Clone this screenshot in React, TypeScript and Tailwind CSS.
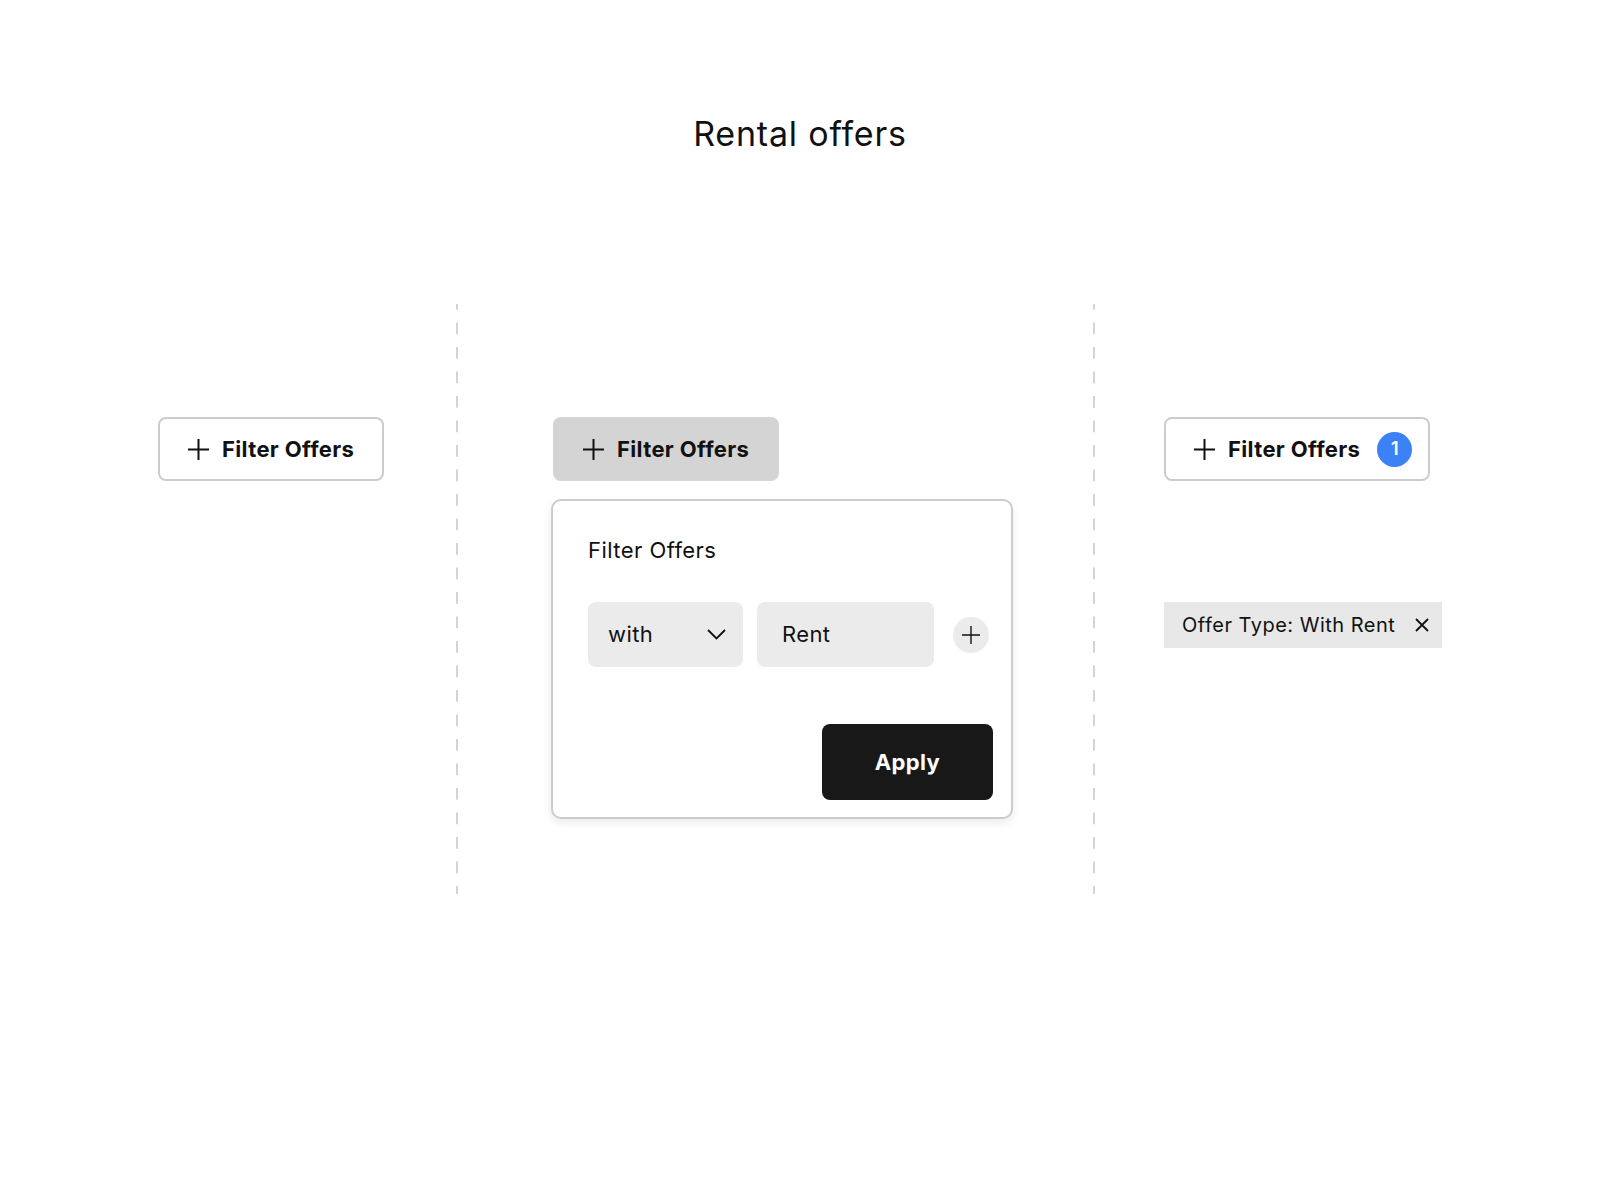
import React from "react";

const PlusIcon = ({ size = 21, stroke = 2 }: { size?: number; stroke?: number }) => (
  <svg width={size} height={size} viewBox="0 0 21 21" fill="none" stroke="currentColor" strokeWidth={stroke}>
    <path d="M10.5 0v21M0 10.5h21" />
  </svg>
);

const Divider = ({ className = "" }: { className?: string }) => (
  <div
    className={`w-[2px] h-full shrink-0 bg-[linear-gradient(to_bottom,#d4d4d4_50%,transparent_50%)] bg-[length:2px_24.5px] bg-[position:0_-6px] ${className}`}
  />
);

const FilterButton = ({
  className = "",
  children,
}: {
  className?: string;
  children?: React.ReactNode;
}) => (
  <button
    className={`h-[64px] rounded-[8px] flex flex-row items-center pl-[28px] text-[22px] font-bold text-[#111] ${className}`}
  >
    <PlusIcon />
    <span className="ml-[13px] leading-none tracking-[0.35px]">Filter Offers</span>
    {children}
  </button>
);

export default function App() {
  return (
    <div className="min-h-screen w-full bg-white text-[#111] font-['Inter',sans-serif]">
      <h1 className="pt-[114px] text-center text-[34px] leading-[40px] font-normal tracking-[0.8px]">Rental offers</h1>

      <div className="mt-[150px] h-[590px] flex flex-row items-stretch px-[158px]">
        {/* default state */}
        <div className="w-[226px] shrink-0 pt-[113px]">
          <FilterButton className="w-[226px] bg-white border-2 border-[#cccccc]" />
        </div>

        <Divider className="ml-[72px]" />

        {/* open state */}
        <div className="w-[462px] shrink-0 ml-[93px] pt-[113px] flex flex-col items-start">
          <FilterButton className="ml-[2px] w-[226px] bg-[#d4d4d4] pl-[30px]" />
          <div className="mt-[18px] w-[462px] h-[320px] rounded-[10px] border-2 border-[#cccccc] bg-white shadow-[0_4px_10px_rgba(0,0,0,0.08)] flex flex-col pt-[35px] pl-[35px] pr-[18px] pb-[17px]">
            <p className="text-[22px] leading-[28px] tracking-[0.45px]">Filter Offers</p>
            <div className="mt-[38px] flex flex-row items-center">
              <div className="w-[155px] h-[65px] rounded-[8px] bg-[#ebebeb] flex flex-row items-center justify-between pl-[20px] pr-[17px] text-[22px] tracking-[0.4px]">
                <span>with</span>
                <svg width="19" height="11" viewBox="0 0 19 11" fill="none" stroke="#111" strokeWidth="1.8">
                  <path d="M1 1l8.5 8.5L18 1" />
                </svg>
              </div>
              <div className="ml-[14px] w-[177px] h-[65px] rounded-[8px] bg-[#ebebeb] flex items-center pl-[25px] text-[22px] tracking-[0.4px]">
                Rent
              </div>
              <button className="ml-[19px] w-9 h-9 rounded-full bg-[#ebebeb] flex items-center justify-center">
                <PlusIcon size={18} stroke={1.6} />
              </button>
            </div>
            <button className="mt-auto self-end w-[171px] h-[76px] rounded-[8px] bg-[#181818] text-white text-[22px] font-bold tracking-[0.35px]">
              Apply
            </button>
          </div>
        </div>

        <Divider className="ml-[80px]" />

        {/* applied state */}
        <div className="w-[278px] shrink-0 ml-[69px] pt-[113px] flex flex-col items-start">
          <FilterButton className="w-[266px] bg-white border-2 border-[#cccccc] pl-[27px]">
            <span className="ml-[17px] w-[35px] h-[35px] rounded-full bg-[#3b82f6] text-white text-[18px] font-semibold flex items-center justify-center leading-none">
              1
            </span>
          </FilterButton>
          <div className="mt-[121px] w-[278px] h-[46px] bg-[#e8e8e8] flex flex-row items-center justify-between pl-[18px] pr-[13px] text-[20px] tracking-[0.5px]">
            <span>Offer Type: With Rent</span>
            <svg width="14" height="14" viewBox="0 0 14 14" fill="none" stroke="#111" strokeWidth="1.8">
              <path d="M1 1l12 12M13 1L1 13" />
            </svg>
          </div>
        </div>
      </div>
    </div>
  );
}
